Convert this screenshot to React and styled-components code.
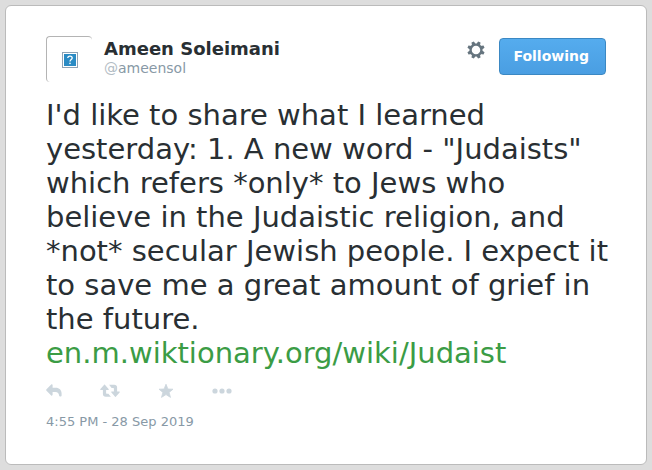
import React from 'react';
import styled, { createGlobalStyle, css } from 'styled-components'

const tweet = {
  name: 'Ameen Soleimani',
  handle: 'ameensol',
  text: 'I\'d like to share what I learned yesterday: 1. A new word - "Judaists" which refers *only* to Jews who believe in the Judaistic religion, and *not* secular Jewish people. I expect it to save me a great amount of grief in the future.',
  link: 'en.m.wiktionary.org/wiki/Judaist',
  date: '4:55 PM - 28 Sep 2019',
}

const teeth = [0, 45, 90, 135, 180, 225, 270, 315]

const GearIcon = () => (
  <svg width="18" height="18" viewBox="0 0 18 18" aria-hidden="true">
    <circle cx="9" cy="9" r="5.4" fill="none" stroke="currentColor" strokeWidth="2.3" />
    {teeth.map((angle) => (
      <path
        key={angle}
        d="M7 3.6 L7.7 0.3 H10.3 L11 3.6 Z"
        fill="currentColor"
        transform={`rotate(${angle + 22.5} 9 9)`}
      />
    ))}
  </svg>
)

const ReplyIcon = () => (
  <svg width="16" height="14" viewBox="0 0 16 14" aria-hidden="true">
    <path
      d="M6.6 0.9 V3.7 H9.6 C13.4 3.7 15.6 6 15.6 9.4 V11.4 C15.6 12.8 13.3 12.8 13.1 11.5 C12.8 9.2 11.8 8 9.4 8 H6.6 V10.8 C6.6 11.6 5.8 11.9 5.2 11.4 L0.5 6.7 C0.1 6.2 0.1 5.6 0.5 5.2 L5.2 0.4 C5.8 -0.1 6.6 0.2 6.6 0.9 Z"
      fill="currentColor"
    />
  </svg>
)

const RetweetIcon = () => (
  <svg width="20" height="14" viewBox="0 0 20 14" aria-hidden="true">
    <path
      d="M4.2 0.8 L0.4 5 C0 5.5 0.3 6.1 0.9 6.1 H2.9 V10 C2.9 11.8 4 12.8 5.7 12.8 H10.9 L8.4 9.7 H6.7 C6.3 9.7 6.1 9.5 6.1 9.1 V6.1 H8.1 C8.7 6.1 9 5.5 8.6 5 L4.9 0.8 C4.7 0.5 4.4 0.5 4.2 0.8 Z"
      fill="currentColor"
    />
    <path
      d="M15.8 12.8 L19.6 8.6 C20 8.1 19.7 7.5 19.1 7.5 H17.1 V3.6 C17.1 1.8 16 0.8 14.3 0.8 H9.1 L11.6 3.9 H13.3 C13.7 3.9 13.9 4.1 13.9 4.5 V7.5 H11.9 C11.3 7.5 11 8.1 11.4 8.6 L15.1 12.8 C15.3 13.1 15.6 13.1 15.8 12.8 Z"
      fill="currentColor"
    />
  </svg>
)

const StarIcon = () => (
  <svg width="16" height="16" viewBox="0 0 16 16" aria-hidden="true">
    <path
      d="M8 1.2 L9.9 6 L15 6.2 L11.1 9.4 L12.5 14.4 L8 11.6 L3.5 14.4 L4.9 9.4 L1 6.2 L6.1 6 Z"
      fill="currentColor"
      stroke="currentColor"
      strokeWidth="0.8"
      strokeLinejoin="round"
    />
  </svg>
)

const MoreIcon = () => (
  <svg width="20" height="6" viewBox="0 0 20 6" aria-hidden="true">
    <circle cx="3" cy="3" r="2.6" fill="currentColor" />
    <circle cx="10" cy="3" r="2.6" fill="currentColor" />
    <circle cx="17" cy="3" r="2.6" fill="currentColor" />
  </svg>
)

const MissingImage = () => (
  <svg width="16" height="16" viewBox="0 0 16 16" aria-hidden="true">
    <rect x="0.5" y="0.5" width="15" height="15" fill="#fff" stroke="#8fa3b5" />
    <rect x="2" y="2" width="12" height="12" fill="#2a8bc4" />
    <path
      d="M5.8 6 C5.8 3.4 10.2 3.4 10.2 6 C10.2 7.6 8 7.6 8 9.6"
      fill="none"
      stroke="#fff"
      strokeWidth="1.3"
    />
    <rect x="7.3" y="10.7" width="1.4" height="1.4" fill="#fff" />
  </svg>
)

const App = () => (
  <>
    <GlobalStyle />
    <Card>
      <Header>
        <Avatar href="#profile" aria-label={tweet.name}>
          <MissingImage />
        </Avatar>
        <Author>
          <Name>{tweet.name}</Name>
          <Handle href="#profile"><At>@</At>{tweet.handle}</Handle>
        </Author>
        <IconButton type="button" aria-label="Settings" $gear>
          <GearIcon />
        </IconButton>
        <FollowButton type="button">Following</FollowButton>
      </Header>
      <Text>{tweet.text}</Text>
      <TextLink href="#judaist">{tweet.link}</TextLink>
      <Actions>
        <IconButton type="button" aria-label="Reply"><ReplyIcon /></IconButton>
        <IconButton type="button" aria-label="Retweet"><RetweetIcon /></IconButton>
        <IconButton type="button" aria-label="Favorite"><StarIcon /></IconButton>
        <IconButton type="button" aria-label="More"><MoreIcon /></IconButton>
      </Actions>
      <Time>{tweet.date}</Time>
    </Card>
  </>
);

const GlobalStyle = createGlobalStyle`
  * {
    box-sizing: border-box;
  }
  body {
    margin: 0;
    padding: 5px;
    background: #dddddd;
    color: #292f33;
    font-family: "DejaVu Sans", sans-serif;
  }
`

const Card = styled.article`
  padding: 30px 32px 33px 40px;
  background: #fff;
  border: 1px solid #bbbbbb;
  border-radius: 6px;
`

const Header = styled.header`
  display: flex;
  align-items: flex-start;
  padding-right: 8px;
`

const Avatar = styled.a`
  display: flex;
  align-items: center;
  justify-content: center;
  width: 46px;
  height: 46px;
  border-top: 1px solid #b4b4b4;
  border-left: 1px solid #b4b4b4;
  border-radius: 4px;
`

const Author = styled.div`
  flex: 1;
  margin-left: 12px;
`

const Name = styled.h1`
  margin: 3px 0 0;
  font-size: 18px;
  line-height: 20px;
`

const Handle = styled.a`
  display: block;
  color: #8899a6;
  font-size: 14px;
  line-height: 18px;
  text-decoration: none;
`

const At = styled.span`
  color: #b2bcc4;
`

const IconButton = styled.button`
  display: flex;
  align-items: center;
  padding: 0;
  border: none;
  background: none;
  color: #ccd6dd;
  cursor: pointer;
  ${({ $gear }) =>
    $gear && css`
      margin: 5px 14px 0 0;
      color: #66757f;
    `
  }
`

const FollowButton = styled.button`
  margin-top: 2px;
  padding: 8px 16px 8px 13px;
  border: 1px solid #3b88c3;
  border-radius: 4px;
  background: linear-gradient(#55acee, #4a9ee2);
  color: #fff;
  font-family: inherit;
  font-size: 14px;
  font-weight: bold;
  line-height: 19px;
  cursor: pointer;
`

const Text = styled.p`
  margin: 16px 0 0;
  font-size: 29px;
  line-height: 34px;
`

const TextLink = styled.a`
  display: block;
  color: #3b9c45;
  font-size: 29px;
  line-height: 34px;
  text-decoration: none;
`

const Actions = styled.div`
  display: flex;
  align-items: center;
  gap: 38px;
  height: 20px;
  margin-top: 11px;
`

const Time = styled.time`
  display: block;
  margin-top: 12px;
  color: #8899a6;
  font-size: 13px;
  line-height: 18px;
`

export default App;
